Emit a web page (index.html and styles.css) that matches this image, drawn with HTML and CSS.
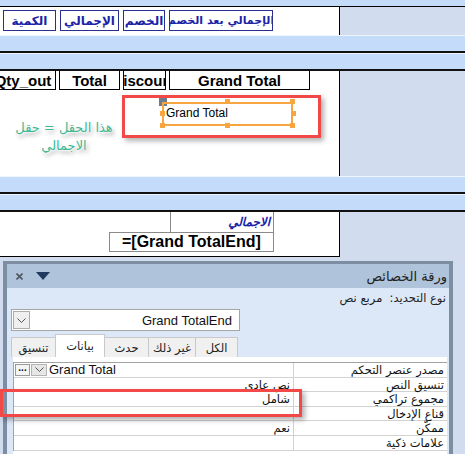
FILE: index.html
```html
<!DOCTYPE html>
<html lang="ar">
<head>
<meta charset="utf-8">
<link rel="stylesheet" href="styles.css">
</head>
<body>
<div class="report">
  <div class="band-top"></div>
  <div class="sec">
    <div class="canvas c1">
      <div class="lbl w53">الكمية</div>
      <div class="lbl w59">الإجمالي</div>
      <div class="lbl w42">الخصم</div>
      <div class="lbl w104 tight">الإجمالي بعد الخصم</div>
    </div>
  </div>
  <div class="band"></div>
  <div class="band"></div>
  <div class="sec">
    <div class="canvas c2">
      <div class="hdr w66 first">Qty_out</div>
      <div class="hdr w61">Total</div>
      <div class="hdr w43">Discount</div>
      <div class="hdr w141">Grand Total</div>
    </div>
  </div>
  <div class="band"></div>
  <div class="band"></div>
  <div class="sec">
    <div class="canvas c3">
      <div class="sumlbl">الاجمالي</div>
      <div class="sumfld" dir="ltr">=[Grand TotalEnd]</div>
    </div>
  </div>
</div>

<div class="panel">
  <div class="titlebar">
    <div class="tools">
      <svg class="ico-x" width="7" height="7" viewBox="0 0 7 7"><path d="M0.5 0.5 L6.5 6.5 M6.5 0.5 L0.5 6.5" stroke="#505660" stroke-width="1.6"/></svg>
      <svg class="ico-tri" width="14" height="8" viewBox="0 0 14 8"><polygon points="0,0 14,0 7,8" fill="#1f3a5e"/></svg>
    </div>
    <div class="title">ورقة الخصائص</div>
  </div>
  <div class="seltype">نوع التحديد:&nbsp; مربع نص</div>
  <div class="combo">
    <div class="combo-btn"><svg width="9" height="5" viewBox="0 0 9 5"><polyline points="0.5,0.5 4.5,4.5 8.5,0.5" fill="none" stroke="#555" stroke-width="1"/></svg></div>
    <div class="combo-val">Grand TotalEnd</div>
  </div>
  <div class="tabs">
    <div class="tab t43">الكل</div>
    <div class="tab t47">غير ذلك</div>
    <div class="tab t44">حدث</div>
    <div class="tab t49 active">بيانات</div>
    <div class="tab t44">تنسيق</div>
  </div>
  <div class="page">
    <div class="grid">
      <div class="prow">
        <div class="pname">مصدر عنصر التحكم</div>
        <div class="pval ltr">
          <span class="dots">...</span><span class="ddbtn"><svg width="9" height="5" viewBox="0 0 9 5"><polyline points="0.5,0.5 4.5,4.5 8.5,0.5" fill="none" stroke="#555" stroke-width="1"/></svg></span><span class="srcval">Grand Total</span>
        </div>
      </div>
      <div class="prow"><div class="pname">تنسيق النص</div><div class="pval">نص عادي</div></div>
      <div class="prow"><div class="pname">مجموع تراكمي</div><div class="pval">شامل</div></div>
      <div class="prow"><div class="pname">قناع الإدخال</div><div class="pval"></div></div>
      <div class="prow"><div class="pname">ممكّن</div><div class="pval">نعم</div></div>
      <div class="prow"><div class="pname">علامات ذكية</div><div class="pval"></div></div>
    </div>
  </div>
</div>

<!-- overlays -->
<div class="redbox rb1"></div>
<div class="movehandle"></div>
<div class="selection">Grand Total</div>
<div class="hd" style="left:225px;top:99px"></div>
<div class="hd" style="left:290px;top:99px"></div>
<div class="hd" style="left:291px;top:111px"></div>
<div class="hd" style="left:290px;top:123px"></div>
<div class="hd" style="left:225px;top:123px"></div>
<div class="hd" style="left:160px;top:123px"></div>
<div class="hd" style="left:160px;top:111px"></div>
<div class="callout"><span class="cl">هذا الحقل = حقل</span><br><span class="cl">الاجمالي</span></div>
<div class="redbox rb2"></div>
</body>
</html>
```
FILE: styles.css
```css
* { box-sizing: border-box; }
html, body { margin: 0; padding: 0; }
body {
  width: 465px;
  height: 454px;
  overflow: hidden;
  position: relative;
  background: #d1ddef;
  font-family: "DejaVu Sans", "Liberation Sans", sans-serif;
}

/* report design area */
.band-top {
  height: 7px;
  background: #c4dbf9;
  border-bottom: 1px solid #000;
}
.band {
  height: 18px;
  background: #c4dbf9;
  border-top: 1px solid #eef5fe;
  border-bottom: 2px solid #111;
}
.sec { display: flex; }
.canvas {
  width: 340px;
  background: #fff;
  border-right: 1px solid #000;
}
.c1 {
  height: 28px;
  display: flex;
  align-items: flex-start;
  padding: 3px 0 0 3px;
  gap: 4px;
}
.lbl {
  height: 21px;
  border: 1px solid #2a2e8e;
  color: #1b22a6;
  font-weight: bold;
  font-size: 12px;
  display: flex;
  align-items: center;
  justify-content: center;
  white-space: nowrap;
  overflow: hidden;
  direction: rtl;
}
.lbl.tight { font-size: 11px; letter-spacing: -0.2px; }
.w53 { width: 53px; }
.w59 { width: 59px; }
.w42 { width: 42px; }
.w104 { width: 104px; }

.c2 {
  height: 105px;
  display: flex;
  align-items: flex-start;
  gap: 3px;
  overflow: hidden;
}
.hdr {
  height: 19px;
  border: 1px solid #000;
  border-top-width: 0;
  font-family: "Liberation Sans", Arial, sans-serif;
  font-weight: bold;
  font-size: 15px;
  color: #000;
  display: flex;
  align-items: center;
  justify-content: center;
  white-space: nowrap;
  overflow: hidden;
  flex-shrink: 0;
}
.first { margin-left: -10px; }
.w66 { width: 66px; }
.w61 { width: 61px; }
.w43 { width: 43px; }
.w141 { width: 141px; }

.c3 {
  height: 45px;
  border-bottom: 1px solid #000;
  display: flex;
  flex-direction: column;
  align-items: flex-end;
  padding-right: 65px;
}
.sumlbl {
  width: 104px;
  height: 21px;
  border: 1px solid #8a8a8a;
  border-top-width: 0;
  direction: rtl;
  text-align: right;
  padding-right: 3px;
  color: #1b22a6;
  font-style: italic;
  font-weight: bold;
  font-size: 12px;
  line-height: 20px;
}
.sumfld {
  width: 165px;
  height: 20px;
  margin-top: -1px;
  border: 1px solid #8a8a8a;
  direction: ltr;
  unicode-bidi: isolate;
  text-align: left;
  font-family: "Liberation Sans", Arial, sans-serif;
  font-weight: bold;
  font-size: 16px;
  line-height: 18px;
  padding-left: 12px;
  color: #000;
  white-space: nowrap;
}

/* property sheet */
.panel {
  margin: 4px 0 0 3px;
  width: 450px;
  height: 200px;
  border: 4px solid #7d8ea3;
  border-top-width: 3px;
  background: #dce8f7;
}
.titlebar {
  height: 24px;
  background: #afc3da;
  display: flex;
  align-items: center;
  justify-content: space-between;
  padding: 0 2px 0 9px;
}
.tools { display: flex; align-items: center; }
.ico-x { display: block; }
.ico-tri { display: block; margin-left: 13px; }
.title {
  direction: rtl;
  font-size: 13px;
  color: #222;
}
.seltype {
  direction: rtl;
  text-align: right;
  padding-right: 3px;
  margin-top: 3px;
  height: 15px;
  font-size: 11.5px;
  line-height: 15px;
  color: #222;
}
.combo {
  margin: 3px 0 0 4px;
  width: 229px;
  height: 22px;
  border: 1px solid #a5a5a5;
  background: #fff;
  display: flex;
  align-items: center;
  padding: 1px;
}
.combo-btn {
  width: 17px;
  height: 18px;
  border: 1px solid #adadad;
  background: #efefef;
  display: flex;
  align-items: center;
  justify-content: center;
}
.combo-val {
  flex: 1;
  text-align: right;
  padding-right: 6px;
  font-family: "Liberation Sans", Arial, sans-serif;
  font-size: 13px;
  color: #111;
}
.tabs {
  margin: 3px 0 0 4px;
  width: 227px;
  height: 23px;
  display: flex;
  direction: rtl;
  align-items: flex-end;
}
.tab {
  height: 20px;
  background: #f0f0f0;
  border: 1px solid #c9c9c9;
  border-bottom: none;
  margin-left: -1px;
  font-size: 11.5px;
  color: #222;
  display: flex;
  align-items: center;
  justify-content: center;
  white-space: nowrap;
}
.tab.active { height: 23px; background: #fff; position: relative; }
.t43 { width: 43px; }
.t47 { width: 48px; }
.t44 { width: 45px; }
.t49 { width: 50px; }

.page {
  margin-left: 6px;
  width: 434px;
  background: #fff;
  padding-top: 5px;
  height: 100px;
}
.grid {
  border-left: 1px solid #a3a3a3;
  border-top: 1px solid #a3a3a3;
}
.prow {
  display: flex;
  direction: rtl;
  height: 14.6px;
  border-bottom: 1px solid #d2d2d2;
}
.pname {
  width: 154px;
  border-left: 1px solid #d2d2d2;
  padding-right: 3px;
  font-size: 11.5px;
  line-height: 14px;
  color: #111;
  white-space: nowrap;
}
.pval {
  flex: 1;
  padding-right: 3px;
  font-size: 11.5px;
  line-height: 14px;
  color: #111;
  white-space: nowrap;
}
.pval.ltr {
  direction: ltr;
  display: flex;
  align-items: center;
  padding: 0 0 0 1px;
}
.dots {
  width: 15px;
  height: 12px;
  border: 1px solid #9a9a9a;
  background: #f4f4f4;
  font-family: "Liberation Sans", Arial, sans-serif;
  font-weight: bold;
  font-size: 10px;
  line-height: 6px;
  text-align: center;
}
.ddbtn {
  width: 16px;
  height: 12px;
  margin-left: 1px;
  border: 1px solid #b4b4b4;
  background: #e6e6e6;
  display: flex;
  align-items: center;
  justify-content: center;
}
.srcval {
  margin-left: 2px;
  font-family: "Liberation Sans", Arial, sans-serif;
  font-size: 13px;
  line-height: 14px;
  color: #111;
}

/* overlays */
.redbox {
  position: absolute;
  border: 3px solid #f24848;
  box-shadow: 3px 3px 5px rgba(0,0,0,0.3);
}
.rb1 { left: 122px; top: 95px; width: 199px; height: 43px; }
.rb2 { left: 0; top: 389px; width: 302px; height: 28px; }
.movehandle {
  position: absolute;
  left: 159px; top: 98px;
  width: 8px; height: 8px;
  background: #6e7b8d;
}
.selection {
  position: absolute;
  left: 162px; top: 102px;
  width: 131px; height: 24px;
  border: 2px solid #f6a540;
  padding: 2px 0 0 2px;
  font-family: "Liberation Sans", Arial, sans-serif;
  font-size: 12px;
  line-height: 14px;
  color: #000;
}
.hd {
  position: absolute;
  width: 5px; height: 5px;
  background: #f6a540;
}
.callout {
  position: absolute;
  left: 8px; top: 119px;
  width: 112px;
  direction: rtl;
  text-align: center;
  font-size: 13px;
  line-height: 18px;
  color: #3fb896;
  text-shadow: 0 0 2px #fff, 0 0 2px #fff, 0 0 3px #fff, 2px 3px 4px rgba(0,0,0,0.35);
}
.cl { white-space: nowrap; }
```
